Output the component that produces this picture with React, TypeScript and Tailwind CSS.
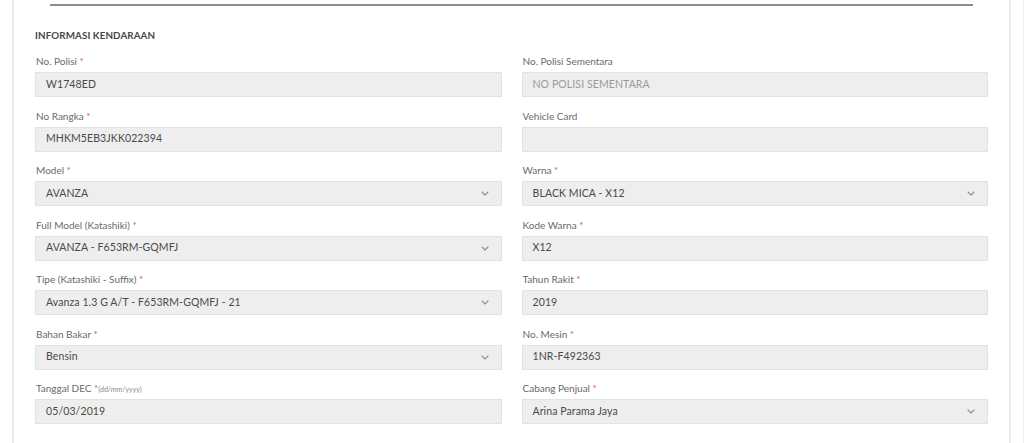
import React from "react";

type Field = {
  label: string;
  required?: boolean;
  hint?: string;
  value: string;
  placeholder?: boolean;
  select?: boolean;
};

const left: Field[] = [
  { label: "No. Polisi", required: true, value: "W1748ED" },
  { label: "No Rangka", required: true, value: "MHKM5EB3JKK022394" },
  { label: "Model", required: true, value: "AVANZA", select: true },
  { label: "Full Model (Katashiki)", required: true, value: "AVANZA - F653RM-GQMFJ", select: true },
  { label: "Tipe (Katashiki - Suffix)", required: true, value: "Avanza 1.3 G A/T - F653RM-GQMFJ - 21", select: true },
  { label: "Bahan Bakar", required: true, value: "Bensin", select: true },
  { label: "Tanggal DEC", required: true, hint: "(dd/mm/yyyy)", value: "05/03/2019" },
];

const right: Field[] = [
  { label: "No. Polisi Sementara", value: "NO POLISI SEMENTARA", placeholder: true },
  { label: "Vehicle Card", value: "" },
  { label: "Warna", required: true, value: "BLACK MICA - X12", select: true },
  { label: "Kode Warna", required: true, value: "X12" },
  { label: "Tahun Rakit", required: true, value: "2019" },
  { label: "No. Mesin", required: true, value: "1NR-F492363" },
  { label: "Cabang Penjual", required: true, value: "Arina Parama Jaya", select: true },
];

function Chevron() {
  return (
    <svg width="8" height="5" viewBox="0 0 8 5" fill="none" className="shrink-0">
      <path d="M1 1l3 3 3-3" stroke="#8a8f99" strokeWidth="1.1" strokeLinecap="round" strokeLinejoin="round" />
    </svg>
  );
}

function FieldView({ f }: { f: Field }) {
  return (
    <div className="flex flex-col">
      <div className="h-[14px] leading-[14px] text-[10px] text-[#6a6a6a] mb-[4px] pl-[1px] whitespace-nowrap">
        {f.label}
        {f.required && <span className="text-[#e05a5a]"> *</span>}
        {f.hint && <span className="text-[7px] text-[#888]">{f.hint}</span>}
      </div>
      <div className="h-[25px] bg-[#eeeeee] border border-[#e2e2e2] flex items-center pl-[10px] pr-[12px]">
        <span
          className={
            "flex-1 text-[10.5px] tracking-[0.1px] " + (f.placeholder ? "text-[#9a9a9a]" : "text-[#4a4a4a]")
          }
        >
          {f.value}
        </span>
        {f.select && <Chevron />}
      </div>
    </div>
  );
}

export default function App() {
  return (
    <div
      className="w-[1024px] h-[443px] overflow-hidden bg-[#fdfdfd] flex"
      style={{ fontFamily: "Lato, 'Open Sans', sans-serif" }}
    >
      <div className="w-[14px] shrink-0 bg-white border-r-2 border-[#ececec]" />
      <div className="flex-1 bg-white flex flex-col">
        <div className="mx-[36px] mt-[4px] h-[2px] bg-[#8c8c8c]" />
        <div className="px-[21px] pt-[23px]">
          <div className="h-[12px] leading-[12px] text-[9.8px] font-bold text-[#474747] tracking-[0.1px]">
            INFORMASI KENDARAAN
          </div>
          <div className="grid grid-cols-2 gap-x-[20px] mt-[13px]">
            <div className="flex flex-col gap-[11.5px]">
              {left.map((f) => (
                <FieldView key={f.label} f={f} />
              ))}
            </div>
            <div className="flex flex-col gap-[11.5px]">
              {right.map((f) => (
                <FieldView key={f.label} f={f} />
              ))}
            </div>
          </div>
        </div>
      </div>
      <div className="w-[15px] shrink-0 bg-white border-l-2 border-[#ececec] border-r border-r-[#f0f0f0]" />
    </div>
  );
}
